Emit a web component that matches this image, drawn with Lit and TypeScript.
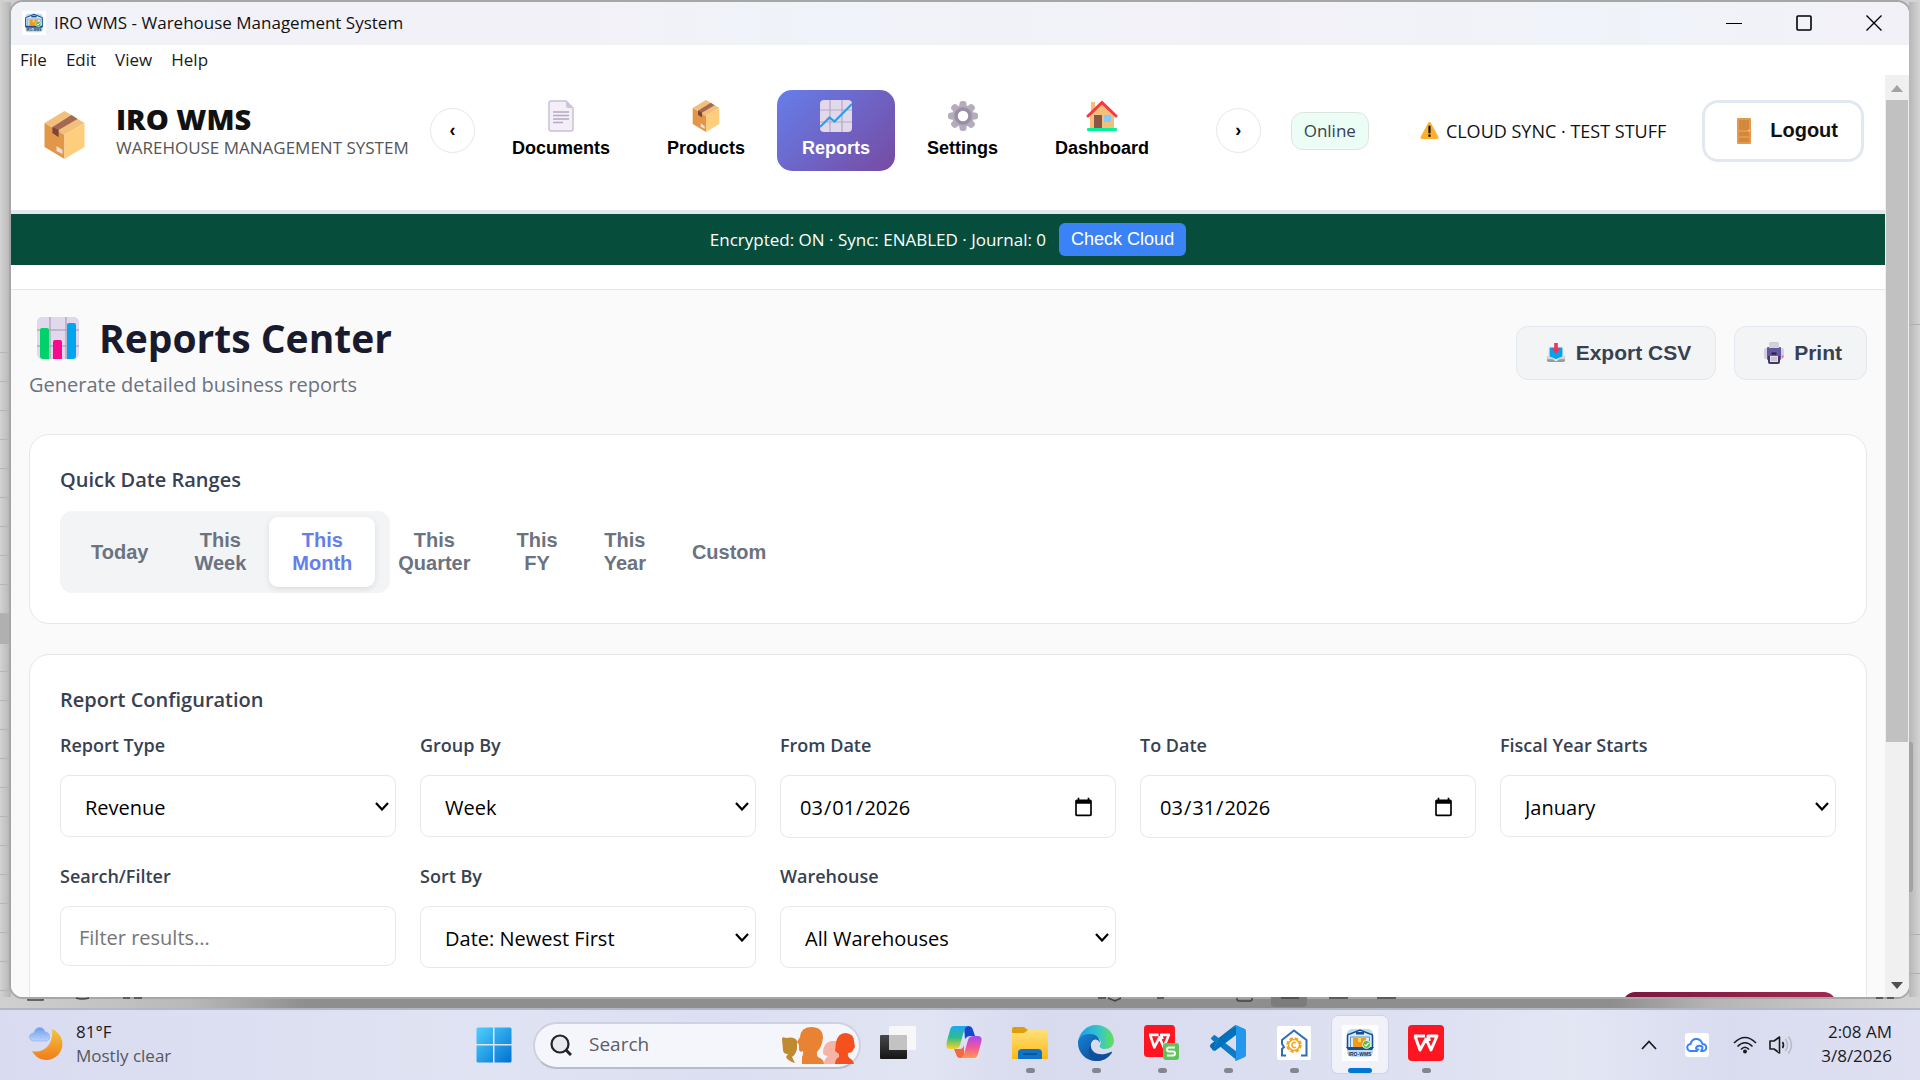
import { LitElement, html, css, svg } from "lit";
import { customElement, state } from "lit/decorators.js";
import { classMap } from "lit/directives/class-map.js";

const box = (cls: string) => html`<svg class=${cls} viewBox="0 0 40 48" aria-hidden="true">
  <path d="M20 0 40 12 20 24 0 12Z" fill="#f3c07b" />
  <path d="M0 12 20 24V48L0 36Z" fill="#e19747" />
  <path d="M40 12 20 24V48L40 36Z" fill="#ffce7c" />
  <path d="M27 4 33 8 14 19V26L8 22V16Z" fill="#a56953" />
  <path d="M8 16 14 19V26L8 22Z" fill="#7d4533" />
  <path d="M12 35 18 39V43L12 40Z" fill="#e4dfe4" />
</svg>`;

const documentIcon = html`<svg class="nav-icon" viewBox="0 0 32 32" aria-hidden="true">
  <path d="M6 1H21L28 8V29Q28 31 26 31H6Q4 31 4 29V3Q4 1 6 1Z" fill="#f4eef9" stroke="#c9c0d2" stroke-width="1.5" />
  <path d="M21 1V6Q21 8 23 8H28Z" fill="#cdc4d6" />
  <path d="M8 12H24M8 15.500H24M8 19H24M8 22.500H18" stroke="#b4a9c0" stroke-width="1.600" />
</svg>`;

const lineChart = html`<svg class="nav-icon" viewBox="0 0 32 32" aria-hidden="true">
  <rect width="32" height="32" rx="4" fill="#e1d8ec" />
  <path d="M10 0V32M22 0V32M0 10H32M0 22H32" stroke="#b4a9c2" stroke-width="1.200" />
  <path d="M0 27 9.500 17.500 14.500 21.500 32 4" fill="none" stroke="#2f9de8" stroke-width="2.200" />
</svg>`;

const gear = html`<svg class="nav-icon" viewBox="0 0 32 32" aria-hidden="true">
  <g fill="#b4acbc">
    ${[0, 45, 90, 135].map((a) => svg`<rect x="12.500" y="1" width="7" height="30" rx="3" transform="rotate(${a} 16 16)" />`)}
    <circle cx="16" cy="16" r="11" />
  </g>
  <circle cx="16" cy="16" r="7" fill="#fff" stroke="#998ea4" stroke-width="3.500" />
</svg>`;

const house = html`<svg class="nav-icon" viewBox="0 0 32 32" aria-hidden="true">
  <path d="M5 2H9V12H5Z" fill="#f3c07b" />
  <path d="M4 14 16 3 28 14V29H4Z" fill="#f3c07b" />
  <path d="M2 16 16 2.500 30 16" fill="none" stroke="#fb3640" stroke-width="3" stroke-linecap="round" />
  <rect x="8" y="15" width="8" height="13" fill="#8d5644" />
  <rect x="18" y="15" width="7" height="7" fill="#83cbff" />
  <rect x="1" y="28" width="30" height="3" rx="1" fill="#00f39a" />
</svg>`;

const warning = html`<svg class="warn-icon" viewBox="0 0 20 18" aria-hidden="true">
  <path d="M10 0Q11 0 11.500 1L19.500 16Q20 18 18 18H2Q0 18 .500 16L8.500 1Q9 0 10 0Z" fill="#ffb02e" />
  <path d="M10 5V11" stroke="#141414" stroke-width="2.400" stroke-linecap="round" />
  <circle cx="10" cy="14.500" r="1.400" fill="#141414" />
</svg>`;

const door = html`<svg class="door-icon" viewBox="0 0 14 26" aria-hidden="true">
  <rect width="14" height="26" rx="1" fill="#e39a4c" />
  <path d="M2 2H12V12H2ZM2 14H12V18H2ZM2 20H12V24H2Z" fill="#d3883e" />
  <circle cx="12" cy="12.500" r="1" fill="#ffce5c" />
</svg>`;

const barChart = html`<svg class="title-icon" viewBox="0 0 42 42" aria-hidden="true">
  <rect width="42" height="42" rx="5" fill="#e1d8ec" />
  <path d="M13 0V42M29 0V42M0 13H42M0 29H42" stroke="#b4a9c2" stroke-width="1.500" />
  <path d="M3 13Q3 11 5 11H10Q12 11 12 13V42H6Q3 42 3 39Z" fill="#00d26a" />
  <path d="M16 25Q16 23 18 23H23Q25 23 25 25V42H16Z" fill="#f70a8d" />
  <path d="M30 8Q30 6 32 6H37Q39 6 39 8V39Q39 42 36 42H30Z" fill="#00a6ed" />
</svg>`;

const inbox = html`<svg class="btn-icon" viewBox="-1 0 22 22" aria-hidden="true">
  <path d="M2 5H18L19 15H1Z" fill="#e6e6e6" />
  <path d="M3 5H17V14Q17 16 13 16.500L10 18 7 16.500Q3 16 3 14Z" fill="#00a6ed" />
  <path d="M0 14 6 16 10 19 14 16 20 14V18Q20 19 19 19H1Q0 19 0 18Z" fill="#d3d3d3" />
  <path d="M0 18H6L10 20 14 18H20V19Q20 21 18 21H2Q0 21 0 19Z" fill="#9b9b9b" />
  <path d="M8 0H12V6H15L10 12 5 6H8Z" fill="#fa2f60" />
</svg>`;

const printer = html`<svg class="btn-icon" viewBox="0 0 20 22" aria-hidden="true">
  <rect x="0" y="6" width="20" height="11" rx="2" fill="#d5d1da" />
  <rect x="5" y="0" width="10" height="8" rx="2" fill="#cdcbd0" />
  <rect x="3" y="5" width="14" height="13" rx="1" fill="#6657a3" />
  <path d="M5 1H15V6H5Z" fill="#d2d2d4" />
  <rect x="7.500" y="10.500" width="5" height="2" fill="#261b45" />
  <path d="M4 14H16V20Q16 22 14 22H6Q4 22 4 20Z" fill="#43366e" />
  <path d="M6 14H14V20H6Z" fill="#e3e0e6" />
  <path d="M7 16H13M7 18H13" stroke="#aaa4b0" stroke-width=".900" />
  <circle cx="18.500" cy="14.500" r="1" fill="#f2599b" />
</svg>`;

const chevronDown = html`<svg class="select-arrow" viewBox="0 0 14 9" aria-hidden="true">
  <path d="M1 1 7 7.500 13 1" fill="none" stroke="#000" stroke-width="2.200" />
</svg>`;

/* Application emblem: a warehouse arch with a parcel inside */
const appLogo = (cls: string) => html`<svg class=${cls} viewBox="0 0 36 36" aria-hidden="true">
  <rect width="36" height="36" fill="#fff" />
  <rect x="5" y="4" width="26" height="28" rx="5" fill="#bcdcf5" />
  <path d="M5.500 23V11Q5.500 9 8 9L18 5 28 9Q30.500 9 30.500 11V23" fill="#d8ecfa" stroke="#174f92" stroke-width="1.600" />
  <rect x="14" y="7" width="8" height="2.500" fill="#174f92" />
  <path d="M8.500 22V12H27.500V22" fill="none" stroke="#5b8fc4" stroke-width="1" />
  <rect x="11" y="13" width="13" height="9" fill="#f39a1b" />
  <path d="M16 13H19V17H16Z" fill="#ffd15a" />
  <path d="M4 22H32L30 25H6Z" fill="#174f92" />
  <circle cx="24.500" cy="19.500" r="4" fill="#54b948" stroke="#fff" stroke-width=".800" />
  <path d="m22.500 19.500 1.500 1.500 2.600-3" fill="none" stroke="#fff" stroke-width="1.200" />
  <text x="18" y="30.500" text-anchor="middle" font-family="Liberation Sans, sans-serif" font-size="5" font-weight="700" fill="#12305c">IRO-WMS</text>
</svg>`;

const wps = svg`<rect width="36" height="36" rx="4" fill="#ff1522" />
  <path d="M6 11H17M7 11 12 25 18 14 23 25 29 11H20L21.500 16" fill="none" stroke="#fff" stroke-width="3" stroke-linejoin="round" />`;

const apps = [
  { name: "Task view", run: "", art: svg`<defs><linearGradient id="tv" x2="0" y2="1"><stop stop-color="#484848" /><stop offset="1" stop-color="#161616" /></linearGradient></defs><rect y="10" width="27" height="24" rx="1" fill="url(#tv)" /><rect x="9" y="1" width="27" height="24" rx="1" fill="#f7f7f7" /><path d="M9 10H27V25H9Z" fill="#c3c3c3" />` },
  { name: "Copilot", run: "", art: svg`<defs><linearGradient id="c1" x2="0" y2="1"><stop stop-color="#1ea7f2" /><stop offset=".5" stop-color="#2ebd8c" /><stop offset="1" stop-color="#ffd21e" /></linearGradient><linearGradient id="c2" x2="0" y2="1"><stop stop-color="#a448f5" /><stop offset=".5" stop-color="#f0569b" /><stop offset="1" stop-color="#ff9a4a" /></linearGradient></defs><path d="M18 1H22Q26 1 27 5L29 11H24Q21 11 19 14Z" fill="#1548cf" /><path d="M18 33H14Q11 33 10 29L8 24H14Q17 24 18 20Z" fill="#f46a3c" /><path d="M8 1H22Q19 2 18 6L14 20Q13 24 8 24H4Q-1 24 1 16L4 5Q5 1 8 1Z" fill="url(#c1)" /><path d="M28 33H14Q17 32 18 29L22 15Q23 11 28 11H32Q37 11 35 18L32 29Q31 33 28 33Z" fill="url(#c2)" />` },
  { name: "File Explorer", run: "on", art: svg`<defs><linearGradient id="fe" x2="0" y2="1"><stop stop-color="#ffe07a" /><stop offset="1" stop-color="#fbb917" /></linearGradient></defs><path d="M0 4Q0 2 2 2H12L16 5H20V10H0Z" fill="#dd9e0a" /><path d="M0 8H12L16 5H34Q36 5 36 7V34H0Z" fill="url(#fe)" /><path d="M6 34V28Q6 24 10 24H26Q30 24 30 28V34Z" fill="#0f74c9" /><path d="M11 29H25" stroke="#0a4a8c" stroke-width="1.500" />` },
  { name: "Edge", run: "on", art: svg`<defs><linearGradient id="e1" x2="1" y2="0"><stop stop-color="#1b9de2" /><stop offset=".6" stop-color="#35c6c9" /><stop offset="1" stop-color="#6adf53" /></linearGradient><linearGradient id="e2" x2="1" y2="1"><stop stop-color="#1682d6" /><stop offset="1" stop-color="#0c3f86" /></linearGradient></defs><path d="M0 18C1 7 9 0 18 0C29 0 36 8 36 16C36 21 32 24 27 24C23 24 21 22 22 20C24 17 22 12 16 12C9 12 2 15 0 18Z" fill="url(#e1)" /><path d="M0 18C0 12 6 9 12 9C19 9 22 14 22 18C18 11 12 16 13 22C14 28 22 32 33 27C30 33 25 36 18 36C8 36 0 28 0 18Z" fill="url(#e2)" /><path d="M13 20C11 30 22 34 33 27C35 26 34 28 33 29C29 34 24 36 19 36C12 34 8 26 13 20Z" fill="#0f4f9b" />` },
  { name: "WPS Spreadsheets", run: "on", art: svg`<g transform="scale(.86 .89)">${wps}</g><rect x="19" y="18" width="16" height="17" rx="3" fill="#5ec35b" /><path d="M31 22.500H25Q23 22.500 23 24.500T25 26.500H29Q31 26.500 31 28.500T29 30.500H23" fill="none" stroke="#fff" stroke-width="2" />` },
  { name: "Visual Studio Code", run: "on", art: svg`<path d="M26 0 6 19 3 25 1 23Q-1 21 1 19L24 1Z" fill="#0a68ae" /><path d="M1 13 4 10Q5 10 6 11L27 27V35L24 33 1 14Z" fill="#0b7bc8" /><path d="M26 0 9 15 4 22 2 25 5 26 26 10Z" fill="#0072bd" /><path d="M26 0 35 4Q36 5 36 6V30Q36 31 35 32L26 36Q24 35 26 33V3Q26 1 24 1Z" fill="#2397ec" />` },
  { name: "Home tools", run: "on", art: svg`<rect x="1" y="1" width="34" height="34" rx="2" fill="#fff" /><path d="M10 30.500H6V24L8 22 6 19V15L18 5.500 30.500 15V30.500H25" fill="none" stroke="#2d6db5" stroke-width="2" /><circle cx="18" cy="20" r="6.500" fill="none" stroke="#f4a623" stroke-width="2.600" stroke-dasharray="3.300 1.800" /><circle cx="18" cy="20" r="5.500" fill="none" stroke="#f4a623" stroke-width="1.500" /><path d="M20 18A2.500 2.500 0 1 0 20 22" fill="none" stroke="#f4a623" stroke-width="1.500" />` },
  { name: "IRO WMS", run: "active", art: null },
  { name: "WPS Office", run: "on", art: wps },
];

const navItems = [
  { label: "Documents", icon: documentIcon },
  { label: "Products", icon: box("nav-icon") },
  { label: "Reports", icon: lineChart },
  { label: "Settings", icon: gear },
  { label: "Dashboard", icon: house },
];

const ranges = ["Today", "This Week", "This Month", "This Quarter", "This FY", "This Year", "Custom"];

type Field = { id: string; label: string; kind: "select" | "date" | "text"; value: string };
const fields: Field[] = [
  { id: "report-type", label: "Report Type", kind: "select", value: "Revenue" },
  { id: "group-by", label: "Group By", kind: "select", value: "Week" },
  { id: "from-date", label: "From Date", kind: "date", value: "2026-03-01" },
  { id: "to-date", label: "To Date", kind: "date", value: "2026-03-31" },
  { id: "fiscal-year", label: "Fiscal Year Starts", kind: "select", value: "January" },
  { id: "search-filter", label: "Search/Filter", kind: "text", value: "Filter results..." },
  { id: "sort-by", label: "Sort By", kind: "select", value: "Date: Newest First" },
  { id: "warehouse", label: "Warehouse", kind: "select", value: "All Warehouses" },
];

@customElement("wms-reports")
class WmsReports extends LitElement {
  @state() private range = "This Month";

  static styles = css`
    :host { display: block; flex: 1; border-top: 1px solid #e5e7eb; background: #fafafa; padding: 24px 18px 0; }
    * { box-sizing: border-box; }
    h1, h2, p { margin: 0; font-weight: inherit; }
    button { font-family: "Liberation Sans", sans-serif; font-weight: 700; border: 0; cursor: pointer; }
    .head { display: flex; justify-content: space-between; align-items: flex-start; height: 90px; margin-bottom: 30px; }
    .title { display: flex; align-items: center; gap: 20px; padding-left: 8px; font-size: 39px; line-height: 48px; font-weight: 700; color: #1a1a2e; }
    .title-icon { width: 42px; height: 42px; }
    .sub { margin-top: 9px; font-size: 20px; line-height: 28px; color: #6b7280; }
    .actions { display: flex; gap: 18px; margin-top: 12px; }
    .action { display: flex; align-items: center; gap: 10px; height: 54px; padding: 0 24px 0 29px; border: 1px solid #e2e8f0; border-radius: 12px; background: #f3f4f6; color: #374151; font-size: 21px; }
    .btn-icon { width: 20px; height: 22px; }
    .card { border: 1px solid #e5e7eb; border-radius: 20px; background: #fff; padding: 30px; margin-bottom: 30px; }
    .card-title { font-size: 20px; line-height: 30px; font-weight: 600; color: #374151; margin-bottom: 16px; }
    .ranges { display: flex; align-items: stretch; width: 330px; padding: 6px 8px; background: #f3f4f6; border-radius: 12px; }
    .range { padding: 12px 23px; border-radius: 9px; background: transparent; color: #6b7280; font-size: 20px; line-height: 23px; }
    .range.on { background: #fff; color: #667eea; box-shadow: 0 2px 6px rgba(0, 0, 0, 0.1); }
    .grid { display: grid; grid-template-columns: repeat(auto-fit, minmax(300px, 1fr)); gap: 24px; align-items: start; }
    .field { display: grid; gap: 16px; min-width: 0; }
    .label { font-size: 18px; line-height: 28px; font-weight: 600; color: #374151; }
    .stack { display: grid; align-items: center; }
    .stack > * { grid-area: 1 / 1; }
    .select-arrow { width: 14px; height: 9px; justify-self: end; margin-right: 7px; pointer-events: none; }
    .control { width: 100%; height: 62px; border: 1px solid #e5e7eb; border-radius: 9px; background: #fff; color: #000; font-family: inherit; font-size: 20px; }
    .control.select { appearance: none; padding: 2px 24px 0; }
    .control.date { height: 63px; padding: 2px 18px 0; }
    .control.text { height: 60px; padding: 2px 18px 0; }
    .control::placeholder { color: #757575; }
    .control::-webkit-calendar-picker-indicator { width: 21px; height: 21px; padding: 0; margin-right: 3px; }
    .foot { display: flex; justify-content: flex-end; margin-top: 24px; }
    .generate { width: 213px; height: 54px; border-radius: 12px; background: linear-gradient(90deg, #7b1840, #a1284f); }
  `;

  private control(f: Field) {
    if (f.kind === "select")
      return html`<div class="stack">
        <select class="control select" id=${f.id}><option>${f.value}</option></select>${chevronDown}
      </div>`;
    if (f.kind === "date") return html`<input class="control date" id=${f.id} type="date" .value=${f.value} />`;
    return html`<input class="control text" id=${f.id} type="text" placeholder=${f.value} />`;
  }

  render() {
    return html`
      <div class="head">
        <div>
          <h1 class="title">${barChart}Reports Center</h1>
          <p class="sub">Generate detailed business reports</p>
        </div>
        <div class="actions">
          <button class="action">${inbox}Export CSV</button>
          <button class="action">${printer}Print</button>
        </div>
      </div>
      <section class="card">
        <h2 class="card-title">Quick Date Ranges</h2>
        <div class="ranges">
          ${ranges.map((r) => html`<button class=${classMap({ range: true, on: r === this.range })} @click=${() => (this.range = r)}>${r}</button>`)}
        </div>
      </section>
      <section class="card">
        <h2 class="card-title">Report Configuration</h2>
        <div class="grid">
          ${fields.map((f) => html`<div class="field"><label class="label" for=${f.id}>${f.label}</label>${this.control(f)}</div>`)}
        </div>
        <div class="foot"><button class="generate" aria-label="Generate"></button></div>
      </section>
    `;
  }
}

@customElement("wms-header")
class WmsHeader extends LitElement {
  static styles = css`
    :host { display: block; }
    * { box-sizing: border-box; }
    button { font-family: "Liberation Sans", sans-serif; cursor: pointer; }
    .bar { display: flex; align-items: center; min-height: 139px; padding: 15px 21px 39px 33px; border-bottom: 4px solid #e2e8f0; background: #fff; white-space: nowrap; }
    .brand-icon { width: 41px; height: 48px; margin: 8px 31px 0 0; }
    .brand { width: 314px; }
    .brand-name { font-size: 29px; line-height: 34px; font-weight: 800; color: #111; }
    .brand-sub { font-size: 17px; line-height: 24px; color: #555; }
    .round { flex: none; width: 45px; height: 45px; padding: 0; border: 1px solid #e5e7eb; border-radius: 50%; background: #fff; color: #000; font-size: 18px; font-weight: 700; }
    .nav { display: flex; gap: 7px; flex: 1; padding-left: 12px; }
    .nav-item { display: flex; flex-direction: column; align-items: center; gap: 6px; height: 81px; padding: 10px 25px; border: 0; border-radius: 15px; background: transparent; color: #000; font-size: 18px; line-height: 21px; font-weight: 700; }
    .nav-item.on { background: linear-gradient(135deg, #667eea, #764ba2); color: #fff; }
    .nav-icon { width: 32px; height: 32px; }
    .online { height: 38px; margin: 0 51px 0 30px; padding: 0 12px; border: 1px solid #dde5e2; border-radius: 12px; background: #ecfdf5; color: #374151; font-size: 17px; line-height: 36px; }
    .sync { display: flex; align-items: center; gap: 7px; margin-right: 36px; font-size: 18px; color: #111; }
    .warn-icon { width: 19px; height: 17px; }
    .logout { display: flex; align-items: center; gap: 19px; height: 62px; padding: 0 23px 0 32px; border: 3px solid #e2e8f0; border-radius: 16px; background: #fff; color: #111; font-size: 20px; font-weight: 700; }
    .door-icon { width: 14px; height: 26px; }
    .status { display: flex; align-items: center; justify-content: center; gap: 13px; height: 51px; background: #064e3b; color: #fff; font-size: 17px; }
    .check { height: 33px; padding: 0 12px; border: 0; border-radius: 6px; background: #3b82f6; color: #fff; font-size: 18px; }
    .space { height: 24px; background: #fff; }
  `;

  render() {
    return html`
      <header class="bar">
        ${box("brand-icon")}
        <div class="brand">
          <div class="brand-name">IRO WMS</div>
          <div class="brand-sub">WAREHOUSE MANAGEMENT SYSTEM</div>
        </div>
        <button class="round" aria-label="Previous">‹</button>
        <nav class="nav">
          ${navItems.map((n) => html`<button class=${classMap({ "nav-item": true, on: n.label === "Reports" })}>${n.icon}${n.label}</button>`)}
        </nav>
        <button class="round" aria-label="Next">›</button>
        <span class="online">Online</span>
        <span class="sync">${warning}CLOUD SYNC · TEST STUFF</span>
        <button class="logout">${door}Logout</button>
      </header>
      <div class="status">
        <span>Encrypted: ON · Sync: ENABLED · Journal: 0</span>
        <button class="check">Check Cloud</button>
      </div>
      <div class="space"></div>
    `;
  }
}

@customElement("desktop-taskbar")
class DesktopTaskbar extends LitElement {
  static styles = css`
    :host { display: grid; grid-template-columns: 1fr auto 1fr; align-items: center; height: 72px; border-top: 2px solid #b3b6c4; background: linear-gradient(90deg, #d9dcf0, #e0e3f2 25%, #dcdff1 38%, #e1e4f2 48%, #d8dbee 54%, #dee1f1 75%, #e3e6f3 82%, #d9dcef 90%, #dfe1f2); color: #1b1b1f; font-size: 17px; line-height: 24px; }
    * { box-sizing: border-box; }
    button { padding: 0; border: 0; background: transparent; font: inherit; color: inherit; cursor: pointer; }
    .weather { display: flex; align-items: center; gap: 13px; padding: 0 0 2px 29px; text-align: left; justify-self: start; }
    .weather-icon { width: 34px; height: 34px; }
    .muted { color: #55575f; }
    .middle { display: flex; align-items: center; }
    .cell { display: grid; place-items: center; width: 66px; height: 70px; padding: 6px 5px 7px; }
    .tile { display: grid; grid-template-rows: 1fr 5px; justify-items: center; align-items: center; width: 56px; height: 57px; padding-top: 2px; border-radius: 6px; }
    .tile.active { background: #f0f1f9; box-shadow: 0 0 0 1px #d2d4e4; }
    .app { width: 36px; height: 36px; }
    .mark { width: 9px; height: 5px; border-radius: 3px; background: transparent; }
    .mark.on { background: #84868f; }
    .mark.active { width: 24px; background: #0078d4; }
    .search { display: flex; align-items: center; gap: 17px; width: 328px; height: 47px; margin: 0 4px 0 6px; padding: 0 4px 0 15px; border: 2px solid #cfd1e2; border-bottom-color: #b9bbca; border-radius: 24px; background: #f5f6fc; }
    .lens { width: 22px; height: 22px; flex: none; }
    .query { flex: 1; min-width: 0; padding: 0 0 2px; border: 0; outline: 0; background: transparent; font: inherit; font-size: 19px; }
    .query::placeholder { color: #5c5d64; }
    .people { width: 74px; height: 38px; flex: none; }
    .tray { display: flex; align-items: center; justify-self: end; padding-right: 28px; }
    .caret { width: 16px; height: 10px; margin-right: 28px; }
    .cloud { width: 24px; height: 24px; margin-right: 24px; }
    .wifi { width: 24px; height: 18px; margin-right: 12px; }
    .sound { width: 24px; height: 22px; margin-right: 26px; }
    .clock { text-align: right; min-width: 73px; padding-bottom: 2px; }
  `;

  render() {
    return html`
      <button class="weather">
        <svg class="weather-icon" viewBox="0 0 34 34" aria-hidden="true">
          <defs>
            <linearGradient id="moon" x2="0" y2="1"><stop stop-color="#f3c43d" /><stop offset="1" stop-color="#f17c1a" /></linearGradient>
            <linearGradient id="cloud" x2="0" y2="1"><stop stop-color="#6f9cec" /><stop offset="1" stop-color="#b9d4fb" /></linearGradient>
          </defs>
          <path d="M23 2A16 16 0 1 1 3 24C14 27 25 18 23 2Z" fill="url(#moon)" />
          <path d="M5 14C-1 14-1 6 5 6C6 -1 15 -1 16 5C22 5 22 14 17 14Z" fill="url(#cloud)" stroke="#8fb3ef" stroke-width=".700" />
        </svg>
        <span>81°F<br /><span class="muted">Mostly clear</span></span>
      </button>
      <div class="middle">
        <button class="cell" aria-label="Start">
          <svg class="app" viewBox="0 0 36 36" aria-hidden="true">
            <defs><linearGradient id="win" x2="1" y2="1"><stop stop-color="#4fd0ff" /><stop offset="1" stop-color="#0071d0" /></linearGradient></defs>
            <path d="M2 .500H17V17H.500V2Q.500 .500 2 .500ZM18.500 .500H34Q35.500 .500 35.500 2V17H18.500ZM.500 18.500H17V35.500H2Q.500 35.500 .500 34ZM18.500 18.500H35.500V34Q35.500 35.500 34 35.500H18.500Z" fill="url(#win)" />
          </svg>
        </button>
        <label class="search">
          <svg class="lens" viewBox="0 0 22 22" aria-hidden="true"><circle cx="10" cy="10" r="8.500" fill="#e9eaf0" stroke="#222" stroke-width="2.200" /><path d="M15.500 15.500 21 21" stroke="#222" stroke-width="3" /></svg>
          <input class="query" type="search" placeholder="Search" aria-label="Search" />
          <svg class="people" viewBox="0 0 74 38" aria-hidden="true">
            <path d="M1 13Q1 10 5 12Q14 10 16 15V23Q15 28 11 31L14 37Q7 35 5 31L7 28Q2 28 2 24Z" fill="#bf8a30" />
            <path d="M42 27Q42 17 50 15H58V38H43Q43 33 47 30Q43 30 42 27Z" fill="#f6b3a6" />
            <path d="M19 11Q20 1 30 1Q42 1 42 12Q41 21 36 26Q35 31 39 32Q43 34 43 38H21V31Q23 28 22 25Q18 27 18 23V19L16 16Z" fill="#e98232" />
            <path d="M55 16Q57 7 65 7Q73 8 73 15L74 21L72 24Q71 27 67 27Q66 31 70 33Q73 35 73 38H54Q54 33 58 31V28L54 25Z" fill="#f5511f" />
          </svg>
        </label>
        ${apps.map(
          (a) => html`<button class="cell" aria-label=${a.name}>
            <span class=${classMap({ tile: true, active: a.run === "active" })}>
              ${a.art ? html`<svg class="app" viewBox="0 0 36 36" aria-hidden="true">${a.art}</svg>` : appLogo("app")}
              <span class=${classMap({ mark: true, on: a.run === "on", active: a.run === "active" })}></span>
            </span>
          </button>`,
        )}
      </div>
      <div class="tray">
        <svg class="caret" viewBox="0 0 16 10" aria-hidden="true"><path d="M1 9 8 1.500 15 9" fill="none" stroke="#1b1b1f" stroke-width="1.800" /></svg>
        <svg class="cloud" viewBox="0 0 24 24" aria-hidden="true"><rect width="24" height="24" rx="3" fill="#fff" /><path d="M12 18H6A3.500 3.500 0 0 1 5.500 11Q7 5.500 12 6 16 6.500 17.500 11A3.500 3.500 0 0 1 18 18H16M16 18Q19 14 16 13 12 12 11 15 11 17 13.500 16.500" fill="none" stroke="#3b82f6" stroke-width="2" stroke-linecap="round" /></svg>
        <svg class="wifi" viewBox="0 0 24 18" aria-hidden="true"><path d="M1 7Q12-4 23 7M4.500 10.500Q12 3 19.500 10.500M8 13.500Q12 9 16 13.500" fill="none" stroke="#1b1b1f" stroke-width="1.600" /><circle cx="12" cy="15.500" r="2" fill="#1b1b1f" /></svg>
        <svg class="sound" viewBox="0 0 24 22" aria-hidden="true"><path d="M1 7H5L10.500 3V19L5 15H1Z" fill="none" stroke="#1b1b1f" stroke-width="1.600" stroke-linejoin="round" /><path d="M13.500 8Q15.500 11 13.500 14" fill="none" stroke="#1b1b1f" stroke-width="1.600" /><path d="M16.500 5Q20.500 11 16.500 17M19.500 2.500Q25.500 11 19.500 19.500" fill="none" stroke="#b7b8c6" stroke-width="1.500" /></svg>
        <div class="clock">2:08 AM<br />3/8/2026</div>
      </div>
    `;
  }
}

@customElement("app-root")
class AppRoot extends LitElement {
  static styles = css`
    :host { display: flex; flex-direction: column; height: 100vh; overflow: hidden; font-family: "Open Sans", "Noto Sans", sans-serif; background: #c4c4c4; }
    * { box-sizing: border-box; }
    button { padding: 0; border: 0; background: transparent; font: inherit; color: inherit; cursor: pointer; }
    .desk { flex: 1; min-height: 0; display: grid; grid-template-columns: 11px minmax(0, 1fr) 11px; grid-template-rows: 2px minmax(0, 1fr) 11px; background: linear-gradient(90deg, #d0d0d0, #b8b8b8 10%, #8e8e8e 16%, #8e8e8e 84%, #b4b4b4 89%, #d4d4d4); }
    .edge { grid-row: 2; display: flex; flex-direction: column; }
    .edge.left { background: linear-gradient(90deg, rgba(0, 0, 0, 0), rgba(0, 0, 0, 0.14)), #d2d2d2; }
    .edge.right { grid-column: 3; background: linear-gradient(90deg, rgba(0, 0, 0, 0.14), rgba(0, 0, 0, 0)), #d4d4d4; }
    .rows { margin-top: 322px; flex: 1; background: repeating-linear-gradient(transparent 0 28px, #b4b4b4 28px 29px); }
    .picked { width: 11px; height: 30px; margin-top: 290px; background: #b0b0b0; }
    .right-line { height: 1px; margin-top: 322px; background: #b0b0b0; }
    .right-thumb { width: 4px; height: 150px; margin-top: 417px; border-radius: 0 3px 3px 0; background: #a2a2a2; }
    .right-line.low { margin-top: 42px; }
    .right-line.last { margin-top: 38px; }
    .strip { grid-row: 3; grid-column: 1 / -1; width: 100%; height: 11px; }
    .window { grid-row: 2; grid-column: 2; display: flex; flex-direction: column; min-height: 0; border-radius: 12px; overflow: hidden; background: #fff; box-shadow: 0 0 0 2px #a6a6a6; }
    .titlebar { display: flex; align-items: center; flex: none; height: 43px; padding: 0 27px 2px 11px; background: linear-gradient(90deg, #f0f3f8, #f3f1f8 12%, #f3f1f8 30%, #eff3f8 40%, #f3f1f8 65%, #eff3f8 85%, #f3f1f8); font-size: 17px; color: #111; }
    .mini { width: 24px; height: 24px; margin-right: 8px; }
    .name { flex: 1; }
    .sys { display: flex; gap: 54px; }
    .sys-icon { display: block; width: 16px; height: 16px; }
    .menubar { display: flex; align-items: center; flex: none; gap: 19px; height: 30px; padding: 0 0 2px 9px; font-size: 17px; color: #1a1a1a; }
    .body { display: flex; flex: 1; min-height: 0; }
    .page { flex: 1; min-width: 0; display: flex; flex-direction: column; overflow: hidden; }
    .page > * { flex-shrink: 0; }
    .scroll { display: flex; flex-direction: column; align-items: center; width: 24px; background: #f0f0f0; }
    .arrow { display: block; width: 12px; height: 7px; margin: 10px 0 8px; flex: none; }
    .thumb { flex: 642; width: 22px; background: #c1c1c1; }
    .track { flex: 230; }
  `;

  render() {
    return html`
      <div class="desk">
        <div class="edge left"><div class="rows"><div class="picked"></div></div></div>
        <main class="window">
          <div class="titlebar">
            ${appLogo("mini")}
            <span class="name">IRO WMS - Warehouse Management System</span>
            <div class="sys">
              <button aria-label="Minimize"><svg class="sys-icon" viewBox="0 0 16 16"><path d="M0 8.500H16" stroke="#000" /></svg></button>
              <button aria-label="Maximize"><svg class="sys-icon" viewBox="0 0 16 16"><rect x="1" y="1" width="14" height="14" rx="1" fill="none" stroke="#000" stroke-width="1.600" /></svg></button>
              <button aria-label="Close"><svg class="sys-icon" viewBox="0 0 16 16"><path d="M.500 .500 15.500 15.500M15.500 .500 .500 15.500" stroke="#000" stroke-width="1.400" /></svg></button>
            </div>
          </div>
          <div class="menubar">${["File", "Edit", "View", "Help"].map((m) => html`<button>${m}</button>`)}</div>
          <div class="body">
            <div class="page"><wms-header></wms-header><wms-reports></wms-reports></div>
            <div class="scroll" aria-hidden="true">
              <svg class="arrow" viewBox="0 0 12 7"><path d="M6 0 12 7H0Z" fill="#a3a3a3" /></svg>
              <div class="thumb"></div>
              <div class="track"></div>
              <svg class="arrow" viewBox="0 0 12 7"><path d="M0 0H12L6 7Z" fill="#505050" /></svg>
            </div>
          </div>
        </main>
        <div class="edge right">
          <div class="right-line"></div>
          <div class="right-thumb"></div>
          <div class="right-line low"></div>
          <div class="right-line last"></div>
        </div>
        <svg class="strip" viewBox="0 0 1920 11" preserveAspectRatio="none" aria-hidden="true">
          <path d="M1271 0H1307V6Q1307 10 1303 10H1275Q1271 10 1271 6Z" fill="#7c7c7c" />
          <g fill="none" stroke="#444" stroke-width="1.500">
            <path d="M28 2V3H43V2M76 1Q82 3 89 1M123 1H130M134 1H142M1098 1H1106M1108 1 1115 4 1121 1M1157 1H1164M1237 1V2Q1237 4 1239 4H1250Q1252 4 1252 2V1" />
            <path d="M1281 1H1299M1329 1H1348M1377 1H1396M1876 1H1883M1887 1H1894" />
          </g>
        </svg>
      </div>
      <desktop-taskbar></desktop-taskbar>
    `;
  }
}
